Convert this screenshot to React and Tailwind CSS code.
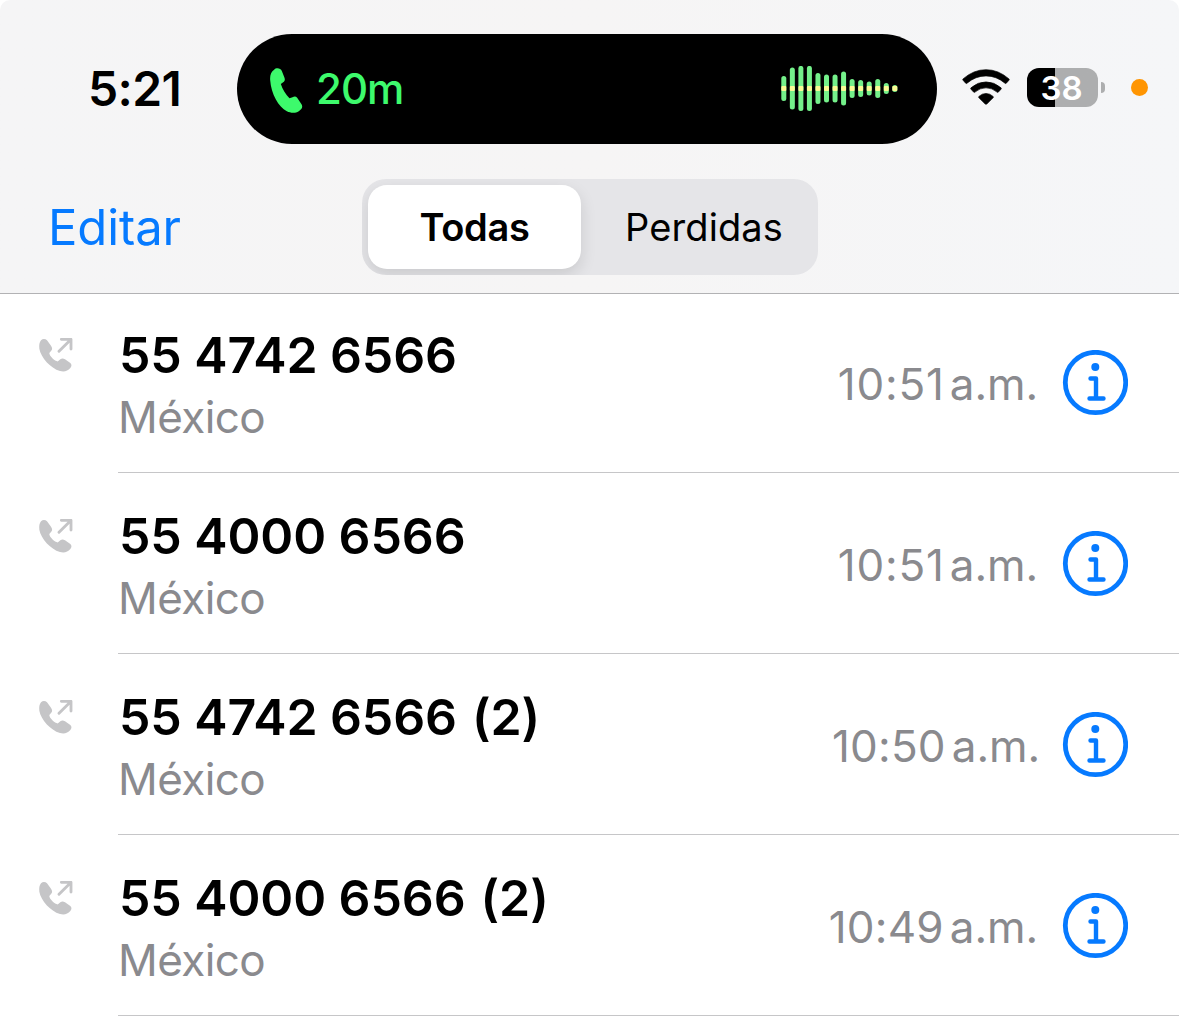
import React, { useState } from 'react';

const calls = [
    { id: 1, number: '55 4742 6566', place: 'México', hour: '10:51', hourClass: 'tracking-[0.8px]', gapClass: 'ml-[5px] mr-[24px]' },
    { id: 2, number: '55 4000 6566', place: 'México', hour: '10:51', hourClass: 'tracking-[0.8px]', gapClass: 'ml-[5px] mr-[24px]' },
    { id: 3, number: '55 4742 6566', count: '(2)', place: 'México', hour: '10:50', hourClass: 'tracking-[0.2px]', gapClass: 'ml-[6px] mr-[22px]' },
    { id: 4, number: '55 4000 6566', count: '(2)', place: 'México', hour: '10:49', hourClass: 'tracking-[0.2px]', gapClass: 'ml-[6px] mr-[24px]' },
];

const waveBars = [25, 42, 45, 45, 31, 28, 28, 34, 19, 17, 14, 19, 11, 7];

const PhoneIcon = () => (
    <svg viewBox="45 39 98 135" className="w-[33px] h-[45px] mt-[2px]" fill="#3dfa6c">
        <path d="M57 44C62 38 76 38 80 48L88 68C90 74 89 78 84 82L77 87C82 104 92 118 103 130L112 127C117 124 122 124 126 128L138 146C142 151 143 158 136 164C125 175 110 176 95 169C70 155 48 118 45 75C44 60 48 50 57 44Z" />
    </svg>
);

const OutgoingIcon = () => (
    <svg viewBox="56 83 102 102" className="w-[34px] h-[34px]">
        <path
            fill="#c5c5c7"
            d="M62 90C67 85 75 85 80 90L92 106C97 113 96 118 92 122L87 128C86 136 106 155 113 153L120 147C124 144 129 144 134 147L150 158C155 163 154 168 150 173C142 183 131 185 119 182C90 173 62 142 57 115C56 104 57 96 62 90Z"
        />
        <path fill="none" stroke="#c5c5c7" strokeWidth="8.5" strokeLinecap="round" strokeLinejoin="round" d="M116 123L150 89M123 87H152V116" />
    </svg>
);

const InfoIcon = () => (
    <svg viewBox="0 0 66 66" className="w-[66px] h-[66px]" fill="none" stroke="#067aff">
        <circle cx="33.5" cy="32.5" r="30.2" strokeWidth="4.8" />
        <circle cx="33.3" cy="17" r="4" fill="#067aff" stroke="none" />
        <path d="M28.500 28.500H34V48.500M27.500 48.500H41.500" strokeWidth="4.4" strokeLinecap="round" strokeLinejoin="round" />
    </svg>
);

const WifiIcon = () => (
    <svg viewBox="38 58 143 109" className="w-[48px] h-[36px] -mt-[2px]" stroke="#000" strokeWidth="2">
        <path d="M40 88Q72 60 109.500 60Q147 60 179 88q2 2 0 4L171 101q-2 2-4 0Q141 79 109.500 79Q78 79 52 101q-2 2-4 0L40 92q-2-2 0-4Z" />
        <path d="M64 115Q84 97 109.500 97Q135 97 155 115q2 2 0 4L147 128q-2 2-4 0Q128 115 109.500 115Q91 115 76 128q-2 2-4 0L64 119q-2-2 0-4Z" />
        <path d="M88 141Q98 132 109.500 132Q121 132 131 141q2 2 0 4L112 164q-2.500 2-5 0L88 145q-2-2 0-4Z" />
    </svg>
);

const WaveForm = () => (
    <svg viewBox="0 0 118 46" className="w-[118px] h-[46px]">
        {waveBars.map((height, i) => (
            <g key={i}>
                <rect x={0.3 + i * 8.54} y={22.4 - height / 2} width="5" height={height} rx="2.5" fill="#74f08a" />
                <rect x={0.3 + i * 8.54} y="19.9" width="5" height="5" rx="1" fill="#fbfb94" />
            </g>
        ))}
    </svg>
);

const StatusBar = () => (
    <div className="flex h-[178px] pt-[34px]">
        <div className="w-[237px] h-[109px] pl-[88px] flex items-center text-[48px] font-semibold tracking-[-0.6px]">5:21</div>
        {/* Call in progress */}
        <div className="w-[700px] h-[110px] rounded-full bg-black flex items-center pl-[33px] pr-[38px]">
            <PhoneIcon />
            <span className="ml-[13px] -mt-[2px] text-[42px] font-medium tracking-[-1px] text-[#3dfa6c]">20m</span>
            <div className="ml-auto">
                <WaveForm />
            </div>
        </div>
        <div className="h-[107px] flex items-center pl-[25px]">
            <WifiIcon />
            <div className="ml-[17px] w-[71px] h-[39px] rounded-[12px] bg-linear-to-r from-black from-[28px] to-[#adaeaf] to-[28px] flex items-center justify-center pt-[2px] pr-[2px] text-[33px] font-semibold text-white">
                38
            </div>
            <div className="ml-[3px] w-[4px] h-[11px] rounded-r-full bg-[#adaeaf]" />
            <div className="ml-[26px] w-[17px] h-[17px] rounded-full bg-[#ff9502]" />
        </div>
    </div>
);

const App = () => {
    const [activeTab, setActiveTab] = useState('todas');

    const tabClass = (id) =>
        activeTab === id
            ? 'bg-white font-semibold tracking-[-0.3px] shadow-[0_6px_16px_rgba(0,0,0,0.12)]'
            : 'font-normal tracking-[0.1px]';

    return (
        <div className="w-[1179px] h-[1017px] overflow-hidden bg-white text-black font-['Inter',sans-serif]">
            <header className="h-[294px] rounded-t-[10px] border-b border-[#b2b2b4] bg-linear-to-r from-[#f5f5f6] via-[#f6f5f5] to-[#f5f6f8]">
                <StatusBar />
                <div className="flex items-center h-[97px]">
                    <button className="w-[362px] pl-[48px] pt-[2px] text-left text-[49px] tracking-[-0.1px] text-[#067aff]">Editar</button>
                    <div className="w-[456px] h-[96px] p-[6px] rounded-[24px] bg-[#e5e5e8] overflow-hidden flex text-[38px]">
                        <button onClick={() => setActiveTab('todas')} className={`w-[213px] h-[84px] pt-[2px] rounded-[19px] ${tabClass('todas')}`}>
                            Todas
                        </button>
                        <button onClick={() => setActiveTab('perdidas')} className={`flex-1 pl-[15px] h-[84px] pt-[2px] rounded-[19px] ${tabClass('perdidas')}`}>
                            Perdidas
                        </button>
                    </div>
                </div>
            </header>

            {/* Recent calls */}
            <ul className="-mt-0.5">
                {calls.map((call) => (
                    <li key={call.id} className="flex h-[181px] pl-[39px]">
                        <div className="w-[79px] pt-[46px]">
                            <OutgoingIcon />
                        </div>
                        <div className="flex-1 flex border-b border-[#c6c6c8] pr-[51px]">
                            <div className="pt-[33px]">
                                <p className="pl-px text-[50px] leading-[60px] font-semibold tracking-[-0.1px]">
                                    {call.number}
                                    {call.count && <span className="ml-[15px]">{call.count}</span>}
                                </p>
                                <p className="text-[44px] leading-[64px] tracking-[-0.6px] text-[#8a8a8e]">{call.place}</p>
                            </div>
                            <div className="ml-auto h-[182px] flex items-center text-[44px] text-[#8a8a8e]">
                                <span className={`pt-[2px] ${call.hourClass}`}>{call.hour}</span>
                                <span className={`pt-[2px] tracking-[-0.1px] ${call.gapClass}`}>a.m.</span>
                                <InfoIcon />
                            </div>
                        </div>
                    </li>
                ))}
            </ul>
        </div>
    );
};

export default App;
